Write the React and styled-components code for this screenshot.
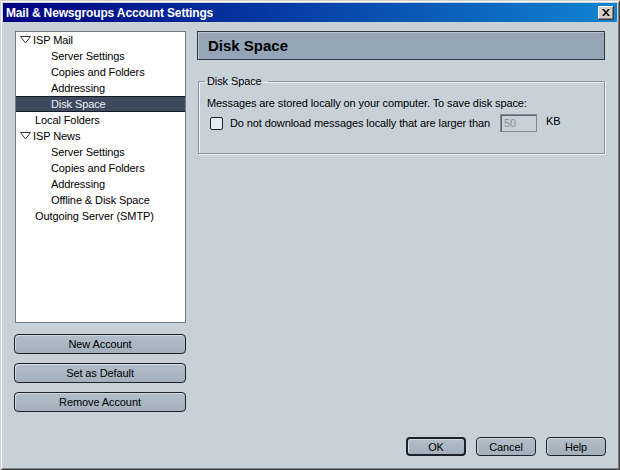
import React from 'react';
import styled, { createGlobalStyle } from 'styled-components';

const GlobalStyle = createGlobalStyle`
  html, body {
    margin: 0;
    padding: 0;
    background: #c8d0d8;
  }
  body {
    font-family: "Liberation Sans", Arial, sans-serif;
    font-size: 11px;
    letter-spacing: -0.1px;
    color: #000;
  }
`;

const Window = styled.div`
  width: 620px;
  height: 470px;
  box-sizing: border-box;
  padding: 3px;
  display: flex;
  flex-direction: column;
  background: #c8d0d8;
  box-shadow: inset 1px 1px #d4d0c8, inset -1px -1px #404040,
    inset 2px 2px #ffffff, inset -2px -2px #808080;
`;

const TitleBar = styled.div`
  height: 19px;
  display: flex;
  align-items: center;
  justify-content: space-between;
  padding: 0 3px 0 3px;
  background: linear-gradient(to right, #000080, #1084d0);
  color: #fff;
  font-weight: bold;
  font-size: 12px;
  letter-spacing: -0.15px;
`;

const CloseButton = styled.div`
  width: 16px;
  height: 14px;
  box-sizing: border-box;
  display: flex;
  align-items: center;
  justify-content: center;
  background: #d4d0c8;
  box-shadow: inset -1px -1px #404040, inset 1px 1px #ffffff,
    inset -2px -2px #808080;
`;

const Body = styled.div`
  flex: 1;
  display: flex;
  flex-direction: column;
  padding: 9px 11px 11px 11px;
`;

const Main = styled.div`
  flex: 1;
  display: grid;
  grid-template-columns: 172px 1fr;
  gap: 11px;
`;

const LeftColumn = styled.div`
  display: flex;
  flex-direction: column;
`;

const Tree = styled.div`
  height: 292px;
  margin-left: 1px;
  box-sizing: border-box;
  background: #fff;
  border: 1px solid #6f7b88;
  display: flex;
  flex-direction: column;
`;

const TreeRow = styled.div`
  height: 16px;
  box-sizing: border-box;
  display: flex;
  align-items: center;
  padding-left: ${(p) => p.$indent}px;
  white-space: nowrap;
  background: ${(p) => (p.$selected ? '#3e4b5e' : 'transparent')};
  color: ${(p) => (p.$selected ? '#e8eef4' : '#000')};
  border-top: 1px solid ${(p) => (p.$selected ? '#141a22' : 'transparent')};
  border-bottom: 1px solid ${(p) => (p.$selected ? '#141a22' : 'transparent')};
`;

const Twisty = styled.svg`
  width: 11px;
  height: 8px;
  margin-right: 2px;
  flex: none;
`;

const SideButtons = styled.div`
  display: flex;
  flex-direction: column;
  gap: 9px;
  margin-top: 11px;
`;

const Button = styled.button`
  height: ${(p) => (p.$small ? 19 : 20)}px;
  width: ${(p) => (p.$small ? '60px' : '100%')};
  box-sizing: border-box;
  border: ${(p) => (p.$default ? 2 : 1)}px solid #1c2228;
  border-radius: 4px;
  background: linear-gradient(#b3becb, #a3afbc);
  box-shadow: inset 1px 1px #d0d8e0;
  font-family: "Liberation Sans", Arial, sans-serif;
  font-size: 11px;
  letter-spacing: -0.1px;
  color: #000;
  padding: 0;
  display: flex;
  align-items: center;
  justify-content: center;
`;

const RightColumn = styled.div`
  display: flex;
  flex-direction: column;
  padding-right: 1px;
`;

const Header = styled.div`
  height: 29px;
  box-sizing: border-box;
  border: 1px solid #303a46;
  box-shadow: inset 1px 1px #b8c4d0;
  background: #95a4b6;
  display: flex;
  align-items: center;
  padding-left: 10px;
  font-weight: bold;
  font-size: 15px;
  letter-spacing: 0;
  color: #000;
`;

const Fieldset = styled.fieldset`
  margin: 15px 0 0 1px;
  padding: 8px 8px 21px 8px;
  border: 1px solid #8a96a4;
  box-shadow: 1px 1px #eef2f6, inset 1px 1px #eef2f6;
  min-inline-size: 0;
`;

const Legend = styled.legend`
  padding: 0 6px 0 2px;
  margin-left: -2px;
  font-size: 11px;
`;

const Text = styled.div`
  line-height: 16px;
`;

const OptionRow = styled.div`
  display: flex;
  align-items: center;
  margin-top: 3px;
  padding-left: 3px;
  white-space: nowrap;
`;

const CheckBox = styled.div`
  width: 13px;
  height: 13px;
  box-sizing: border-box;
  border: 1px solid #1c2228;
  border-radius: 2px;
  background: #e4ecf2;
  margin-right: 7px;
  flex: none;
`;

const SizeInput = styled.div`
  width: 37px;
  height: 18px;
  box-sizing: border-box;
  margin-left: 10px;
  border: 1px solid #7f8a96;
  box-shadow: inset 1px 1px #5c6670;
  background: #c8d0d8;
  color: #8a949e;
  padding-left: 3px;
  display: flex;
  align-items: center;
`;

const Unit = styled.span`
  margin-left: 9px;
  margin-top: -4px;
`;

const Footer = styled.div`
  display: flex;
  justify-content: flex-end;
  gap: 10px;
`;

const treeItems = [
  { label: 'ISP Mail', indent: 4, open: true },
  { label: 'Server Settings', indent: 35 },
  { label: 'Copies and Folders', indent: 35 },
  { label: 'Addressing', indent: 35 },
  { label: 'Disk Space', indent: 35, selected: true },
  { label: 'Local Folders', indent: 19 },
  { label: 'ISP News', indent: 4, open: true },
  { label: 'Server Settings', indent: 35 },
  { label: 'Copies and Folders', indent: 35 },
  { label: 'Addressing', indent: 35 },
  { label: 'Offline & Disk Space', indent: 35 },
  { label: 'Outgoing Server (SMTP)', indent: 19 },
];

function App() {
  return (
    <>
      <GlobalStyle />
      <Window>
        <TitleBar>
          <span>Mail &amp; Newsgroups Account Settings</span>
          <CloseButton>
            <svg width="8" height="7" viewBox="0 0 8 7">
              <path d="M0 0h2l2 2.5L6 0h2L5 3.5 8 7H6L4 4.5 2 7H0l3-3.5z" fill="#000" />
            </svg>
          </CloseButton>
        </TitleBar>
        <Body>
          <Main>
            <LeftColumn>
              <Tree>
                {treeItems.map((item, i) => (
                  <TreeRow key={i} $indent={item.indent} $selected={item.selected}>
                    {item.open && (
                      <Twisty viewBox="0 0 11 8">
                        <polygon points="0.5,0.5 10.5,0.5 5.5,7" fill="#fff" stroke="#2c3440" />
                      </Twisty>
                    )}
                    {item.label}
                  </TreeRow>
                ))}
              </Tree>
              <SideButtons>
                <Button>New Account</Button>
                <Button>Set as Default</Button>
                <Button>Remove Account</Button>
              </SideButtons>
            </LeftColumn>
            <RightColumn>
              <Header>Disk Space</Header>
              <Fieldset>
                <Legend>Disk Space</Legend>
                <Text>Messages are stored locally on your computer. To save disk space:</Text>
                <OptionRow>
                  <CheckBox />
                  <span>Do not download messages locally that are larger than</span>
                  <SizeInput>50</SizeInput>
                  <Unit>KB</Unit>
                </OptionRow>
              </Fieldset>
            </RightColumn>
          </Main>
          <Footer>
            <Button $small $default>OK</Button>
            <Button $small>Cancel</Button>
            <Button $small>Help</Button>
          </Footer>
        </Body>
      </Window>
    </>
  );
}

export default App;
